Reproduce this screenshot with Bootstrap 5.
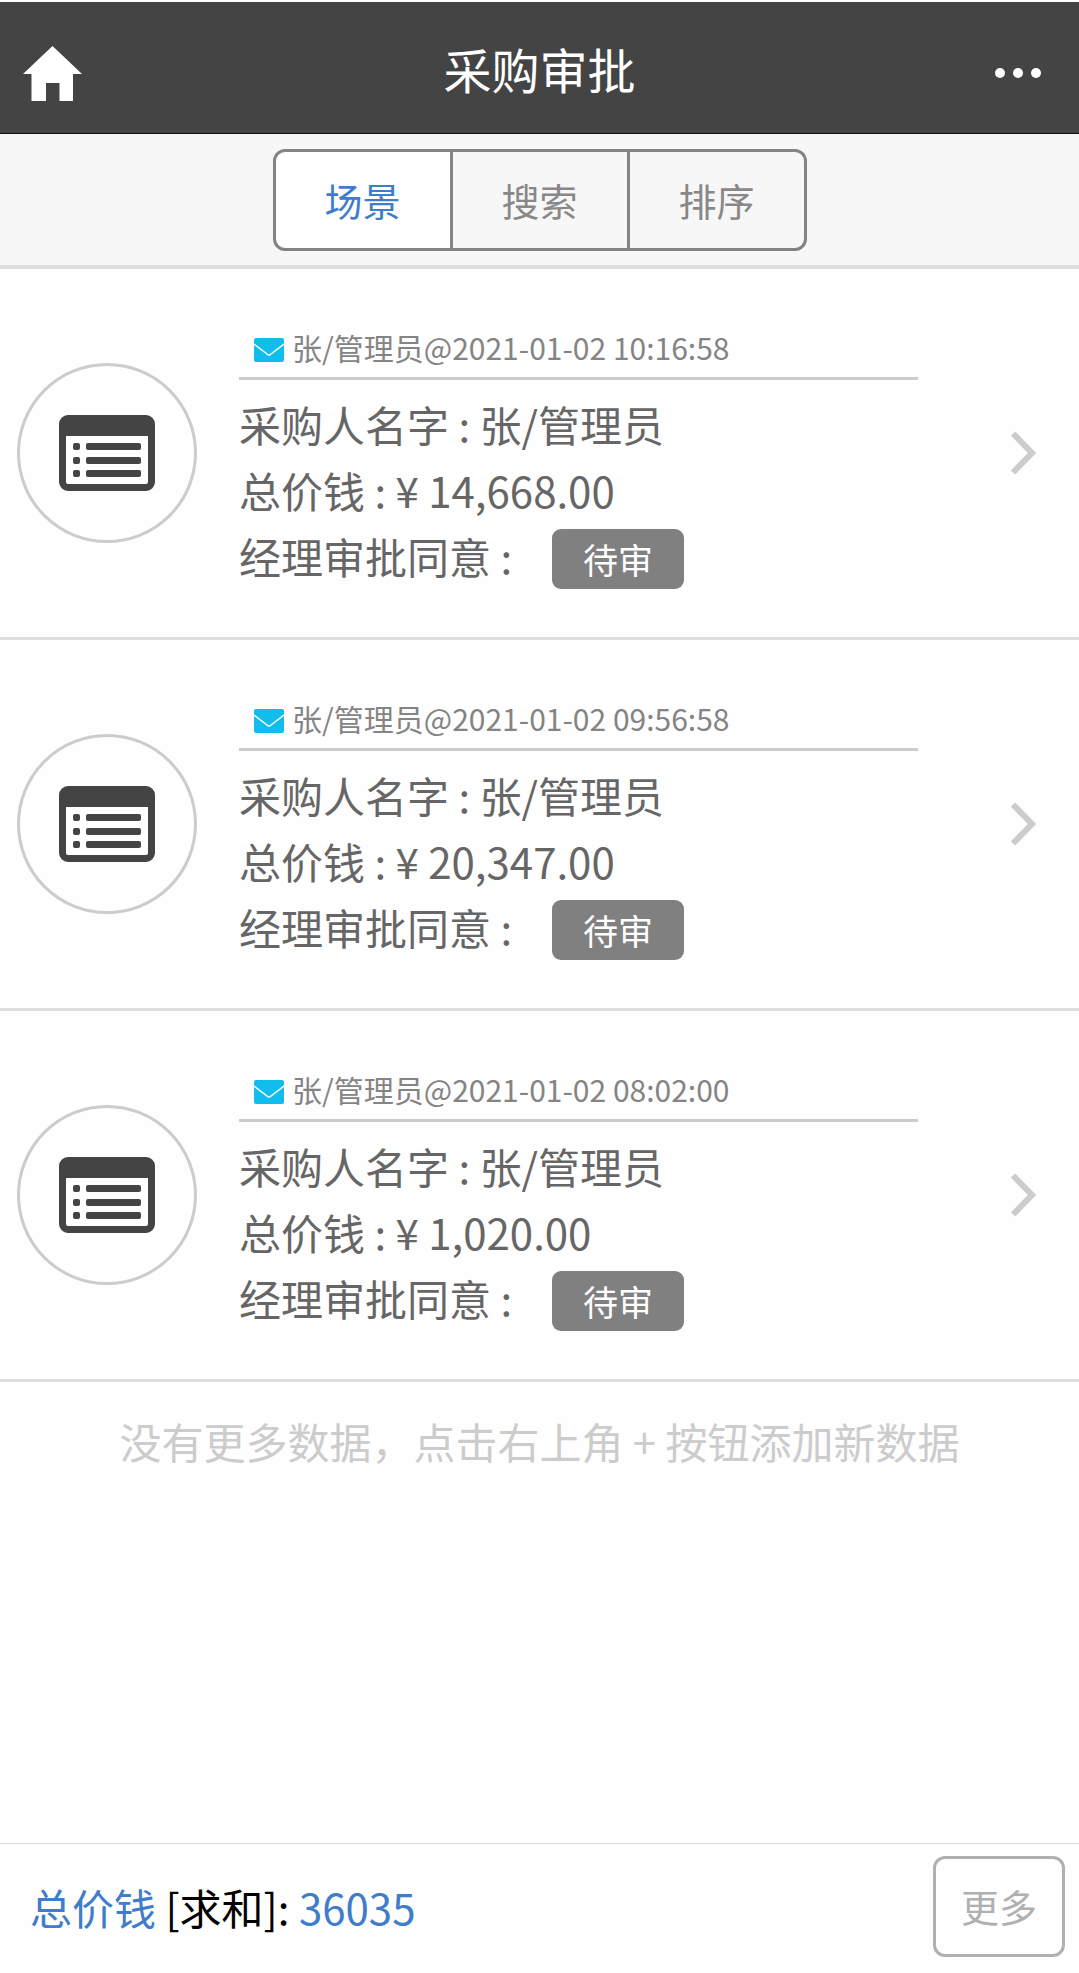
<!DOCTYPE html>
<html lang="zh-CN">
<head>
<meta charset="utf-8">
<meta name="viewport" content="width=device-width, initial-scale=1">
<title>采购审批</title>
<link href="https://cdn.jsdelivr.net/npm/bootstrap@5.3.0/dist/css/bootstrap.min.css" rel="stylesheet">
<style>
  body { font-family: "Noto Sans CJK SC", sans-serif; font-size: 42px; line-height: 66px; color: #666; background: #fefefe; }
  .app-bar { height: 134px; border-top: 2px solid #fff; border-bottom: 1px solid #111; background: #444; padding: 0 38px 0 22px; }
  .app-bar h1 { font-size: 48px; line-height: 66px; color: #fff; }
  .app-bar svg { display: block; margin-top: 10px; }
  .bar-side { width: 76px; }
  .bar-side-end { width: 60px; }
  .filter-bar { background: #f7f7f7; border-bottom: 4px solid #ddd; padding: 15px 0 14px; }
  .filter-bar .btn { width: 180px; height: 102px; font-size: 38px; border: 3px solid #848484; border-radius: 12px; color: #888; background: transparent; padding: 0 0 2px; }
  .filter-bar .btn-group > .btn + .btn { margin-left: -3px; }
  .filter-bar .btn.active { color: #3f7ccb; background: #fff; border-color: #848484; }
  .record-list > .record { border-width: 0 0 3px; border-color: #ddd; background: transparent; color: inherit; padding: 0 43px 0 17px; height: 371px; }
  .record-list > .record:hover { background: #f7f7f7; }
  .avatar-ring { width: 180px; height: 180px; border: 3px solid #ccc; border-radius: 50%; margin-right: 42px; }
  .record-meta { font-size: 30px; line-height: 44px; color: #848484; border-bottom: 3px solid #ccc; padding: 10px 0 8px 15px; margin-bottom: 11px; gap: 8px; }
  .record-meta svg { margin-top: 5px; }
  .record-body { margin-right: 92px; padding-bottom: 2px; }
  .status-tag { width: 132px; height: 60px; font-size: 35px; font-weight: 400; line-height: 60px; background: #808080; border-radius: 9px; padding: 0; margin: 6px 0 0 40px; }
  .empty-note { color: #ccc; padding-top: 26px; }
  .sum-bar { border-top: 1px solid #ddd; padding: 12px 14px 16px 30px; background: #fefefe; }
  .sum-text { color: #000; }
  .sum-text .accent { color: #3f7ccb; }
  .more-btn { width: 132px; height: 101px; font-size: 38px; border: 3px solid #b0b0b0; border-radius: 12px; color: #b0b0b0; padding: 0 0 2px; }
</style>
</head>
<body class="min-vh-100 d-flex flex-column">

<svg class="d-none" aria-hidden="true">
  <symbol id="ic-form" viewBox="0 0 96 76">
    <path fill="#444" fill-rule="evenodd" d="M9 0H87A9 9 0 0 1 96 9V67A9 9 0 0 1 87 76H9A9 9 0 0 1 0 67V9A9 9 0 0 1 9 0ZM7 21V67Q7 69 9 69H87Q89 69 89 67V21Z"/>
    <g fill="#444">
      <rect x="14" y="28" width="7" height="7" rx="2"/><rect x="27" y="28" width="55" height="7" rx="2"/>
      <rect x="14" y="42" width="7" height="7" rx="2"/><rect x="27" y="42" width="55" height="7" rx="2"/>
      <rect x="14" y="55" width="7" height="7" rx="2"/><rect x="27" y="55" width="55" height="7" rx="2"/>
    </g>
  </symbol>
  <symbol id="ic-mail" viewBox="0 0 30 24">
    <rect width="30" height="24" rx="2" fill="#10bdec"/>
    <path d="M0 6L13 16Q15 18 17 16L30 6" fill="none" stroke="#fff" stroke-width="1.5"/>
  </symbol>
  <symbol id="ic-next" viewBox="0 0 26 44">
    <path d="M3 2.500L22 22L3 41.500" fill="none" stroke="#ccc" stroke-width="6"/>
  </symbol>
</svg>

<header class="app-bar d-flex align-items-center justify-content-between">
  <a href="#" class="bar-side d-flex" aria-label="首页">
    <svg width="60" height="56" viewBox="0 0 60 56"><path fill="#fff" d="M30.500 1L60 29H51V57H37.500V38H24V57H9.500V29H1Z"/></svg>
  </a>
  <h1 class="m-0 fw-normal">采购审批</h1>
  <button type="button" class="btn p-0 border-0 bar-side-end d-flex justify-content-end" aria-label="更多操作">
    <svg width="46" height="10" viewBox="0 0 46 10" fill="#fff"><circle cx="5" cy="5" r="5"/><circle cx="23" cy="5" r="5"/><circle cx="41" cy="5" r="5"/></svg>
  </button>
</header>

<nav class="filter-bar d-flex justify-content-center">
  <div class="btn-group" role="group" aria-label="筛选">
    <button type="button" class="btn active">场景</button>
    <button type="button" class="btn">搜索</button>
    <button type="button" class="btn">排序</button>
  </div>
</nav>

<main class="flex-grow-1">
  <div class="record-list list-group rounded-0">
    <a href="#" class="record list-group-item d-flex align-items-center">
      <span class="avatar-ring d-flex align-items-center justify-content-center flex-shrink-0"><svg width="96" height="76"><use href="#ic-form"/></svg></span>
      <div class="record-body flex-grow-1">
        <div class="record-meta d-flex align-items-center"><svg width="30" height="24"><use href="#ic-mail"/></svg><span>张/管理员@2021-01-02 10:16:58</span></div>
        <div>采购人名字 : 张/管理员</div>
        <div>总价钱 : ¥ 14,668.00</div>
        <div class="d-flex align-items-center">经理审批同意 :<span class="status-tag badge">待审</span></div>
      </div>
      <svg class="flex-shrink-0" width="26" height="44"><use href="#ic-next"/></svg>
    </a>
    <a href="#" class="record list-group-item d-flex align-items-center">
      <span class="avatar-ring d-flex align-items-center justify-content-center flex-shrink-0"><svg width="96" height="76"><use href="#ic-form"/></svg></span>
      <div class="record-body flex-grow-1">
        <div class="record-meta d-flex align-items-center"><svg width="30" height="24"><use href="#ic-mail"/></svg><span>张/管理员@2021-01-02 09:56:58</span></div>
        <div>采购人名字 : 张/管理员</div>
        <div>总价钱 : ¥ 20,347.00</div>
        <div class="d-flex align-items-center">经理审批同意 :<span class="status-tag badge">待审</span></div>
      </div>
      <svg class="flex-shrink-0" width="26" height="44"><use href="#ic-next"/></svg>
    </a>
    <a href="#" class="record list-group-item d-flex align-items-center">
      <span class="avatar-ring d-flex align-items-center justify-content-center flex-shrink-0"><svg width="96" height="76"><use href="#ic-form"/></svg></span>
      <div class="record-body flex-grow-1">
        <div class="record-meta d-flex align-items-center"><svg width="30" height="24"><use href="#ic-mail"/></svg><span>张/管理员@2021-01-02 08:02:00</span></div>
        <div>采购人名字 : 张/管理员</div>
        <div>总价钱 : ¥ 1,020.00</div>
        <div class="d-flex align-items-center">经理审批同意 :<span class="status-tag badge">待审</span></div>
      </div>
      <svg class="flex-shrink-0" width="26" height="44"><use href="#ic-next"/></svg>
    </a>
  </div>
  <p class="empty-note text-center m-0">没有更多数据，点击右上角 + 按钮添加新数据</p>
</main>

<footer class="sum-bar sticky-bottom d-flex align-items-center justify-content-between">
  <div class="sum-text"><span class="accent">总价钱</span> [求和]: <span class="accent">36035</span></div>
  <button type="button" class="more-btn btn">更多</button>
</footer>

<script src="https://cdn.jsdelivr.net/npm/bootstrap@5.3.0/dist/js/bootstrap.bundle.min.js"></script>
</body>
</html>
